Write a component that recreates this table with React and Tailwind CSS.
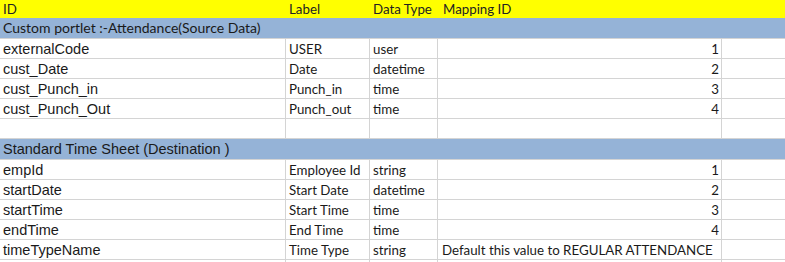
import React from "react";

const src = [
  ["externalCode", "USER", "user", "1"],
  ["cust_Date", "Date", "datetime", "2"],
  ["cust_Punch_in", "Punch_in", "time", "3"],
  ["cust_Punch_Out", "Punch_out", "time", "4"],
  ["", "", "", ""],
];
const dst = [
  ["empId", "Employee Id", "string", "1"],
  ["startDate", "Start Date", "datetime", "2"],
  ["startTime", "Start Time", "time", "3"],
  ["endTime", "End Time", "time", "4"],
  ["timeTypeName", "Time Type", "string", "DEFAULT"],
  ["", "", "", ""],
];

function Row({ r }) {
  const isDefault = r[3] === "DEFAULT";
  return (
    <div className="flex h-[20px] border-b border-[#d4d4d4] text-[#1a1a1a] whitespace-nowrap text-[13.3px] leading-[20px]">
      <div className="w-[286px] pl-[3px] text-[14.5px] border-r border-[#d4d4d4] font-['Liberation_Sans',Arial,sans-serif]">{r[0]}</div>
      <div className="w-[84px] pl-[3px] border-r border-[#d4d4d4]">{r[1]}</div>
      <div className="w-[68px] pl-[3px] border-r border-[#d4d4d4]">{r[2]}</div>
      {isDefault ? (
        <div className="w-[284px] pl-[4px] border-r border-[#d4d4d4]">Default this value to REGULAR ATTENDANCE</div>
      ) : (
        <div className="w-[284px] pr-[2px] text-right border-r border-[#d4d4d4]">{r[3]}</div>
      )}
      <div className="flex-1" />
    </div>
  );
}

export default function App() {
  return (
    <div className="w-[785px] h-[262px] overflow-hidden bg-white font-[Lato,'Open_Sans',sans-serif]">
      <div className="flex h-[18px] bg-[#ffff00] text-[13.3px] leading-[18px] text-[#222]">
        <div className="w-[286px] pl-[3px]">ID</div>
        <div className="w-[84px] pl-[3px]">Label</div>
        <div className="w-[68px] pl-[3px]">Data Type</div>
        <div className="flex-1 pl-[5px]">Mapping ID</div>
      </div>
      <div className="h-[21px] bg-[#95b3d7] border-b border-[#d4d4d4] pl-[3px] text-[14px] leading-[20px] text-[#1a1a1a]">
        Custom portlet :-Attendance(Source Data)
      </div>
      {src.map((r, i) => <Row key={"s" + i} r={r} />)}
      <div className="h-[21px] bg-[#95b3d7] border-b border-[#d4d4d4] pl-[3px] text-[14.5px] leading-[20px] text-[#1a1a1a] font-['Liberation_Sans',Arial,sans-serif]">
        Standard Time Sheet (Destination )
      </div>
      {dst.map((r, i) => <Row key={"d" + i} r={r} />)}
    </div>
  );
}
